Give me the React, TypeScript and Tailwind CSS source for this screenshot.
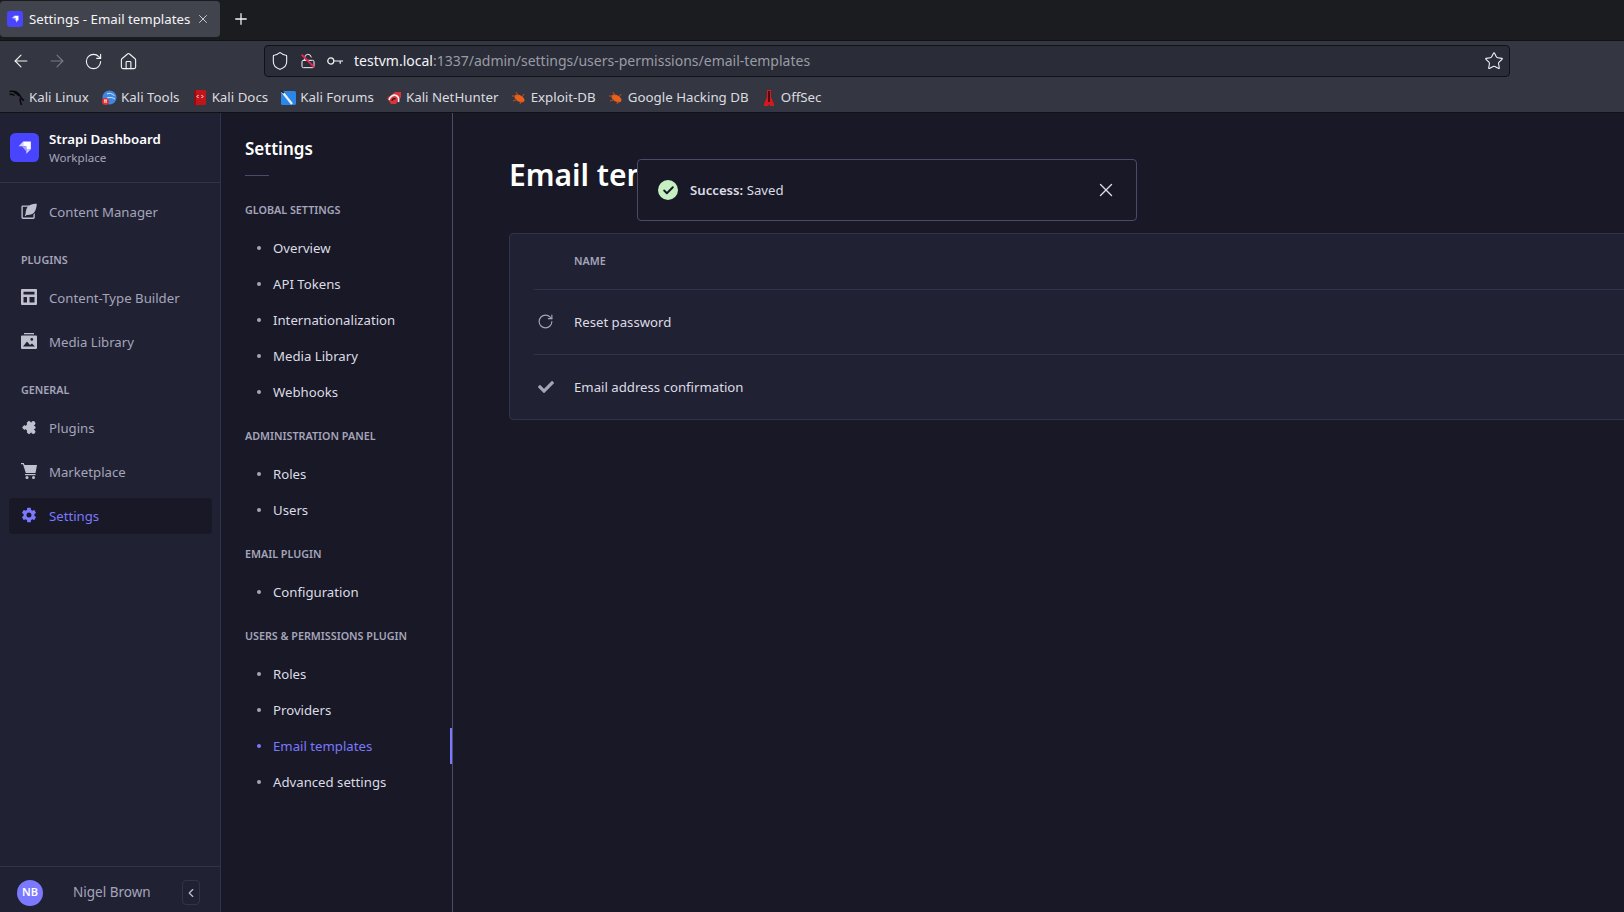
import { ArrowLeft, ArrowRight, Check, ChevronLeft, House, LockOpen, Plus, RotateCw, Shield, Star, X } from 'lucide-react';
import { FaCheck } from 'react-icons/fa';
import { IoSettingsSharp } from 'react-icons/io5';

/* Strapi mark */
function StrapiLogo({ className }: { className: string }) {
  return (
    <svg viewBox="0 0 32 32" className={className}>
      <rect width="32" height="32" rx="6" fill="#4945ff" />
      <path d="M14.500 9.500H23V18h-5v-3.500h-3.500z" fill="#fff" />
      <path d="M14.500 9.500v5h-5z" fill="#d3d2ff" />
      <path d="M18 18h5l-5 5z" fill="#d3d2ff" />
      <path d="M13 14.500h5V20z" fill="#a9a7ff" />
    </svg>
  );
}

function ContentIcon() {
  return (
    <svg viewBox="0 0 18 18" className="w-[17px] h-[17px]" fill="#c0c0cf">
      <path d="M17.800.2c-5 .2-9.300 1.400-11 4.600-1.200 2.300-1.600 5-1.700 7.200l-.9 1.700 1.200.5.800-1.400c4 .3 7-.7 8.800-3C16.700 7.300 17.500 4 17.800.2z" />
      <path d="M9.500 2.200H2A1.500 1.500 0 0 0 .5 3.700v12.100A1.500 1.500 0 0 0 2 17.300h12a1.500 1.500 0 0 0 1.500-1.500V11l-1.500 1.500v3.300H2V3.700h6.300z" />
    </svg>
  );
}

function LayoutIcon() {
  return (
    <svg viewBox="0 0 16 16" className="w-[16px] h-[16px]" fill="#c0c0cf">
      <path fillRule="evenodd" d="M1 0h14a1 1 0 0 1 1 1v14a1 1 0 0 1-1 1H1a1 1 0 0 1-1-1V1a1 1 0 0 1 1-1zm1.500 2.800v2.700h11V2.800zm0 5.200v5.500h3.500V8zm6 0v5.500h5V8z" />
    </svg>
  );
}

function MediaIcon() {
  return (
    <svg viewBox="0 0 16 16" className="w-[16px] h-[16px]" fill="#c0c0cf">
      <path d="M3 0h10v1.300H3z" />
      <path fillRule="evenodd" d="M1 2.500h14a1 1 0 0 1 1 1V15a1 1 0 0 1-1 1H1a1 1 0 0 1-1-1V3.500a1 1 0 0 1 1-1zM10.800 5a1.400 1.400 0 1 0 0 2.800 1.400 1.400 0 0 0 0-2.800zM2 13.500h12l-3-3-2 1.500-3-3.500z" />
    </svg>
  );
}

function PuzzleIcon() {
  return (
    <svg viewBox="0 0 16 16" className="w-[17px] h-[17px]" fill="#c0c0cf">
      <g transform="rotate(45 8 8)">
        <rect x="3" y="3" width="10" height="10" rx="1" />
        <circle cx="8" cy="2" r="2.200" />
        <circle cx="14" cy="8" r="2.200" />
        <circle cx="3" cy="8" r="1.600" fill="#212134" />
        <circle cx="8" cy="13" r="1.600" fill="#212134" />
      </g>
    </svg>
  );
}

function CartIcon() {
  return (
    <svg viewBox="0 0 16 16" className="w-[16px] h-[16px]" fill="#c0c0cf">
      <path d="M0 0h2.800l.8 2H16l-1.500 8H4.800L2 1.300H0z" />
      <rect x="4" y="11" width="10.500" height="1.200" />
      <circle cx="6" cy="14.500" r="1.500" />
      <circle cx="12.500" cy="14.500" r="1.500" />
    </svg>
  );
}

function Dot({ active }: { active?: boolean }) {
  return <span className={`w-[4px] h-[4px] rounded-full shrink-0 ${active ? 'bg-[#7b79ff]' : 'bg-[#a5a5ba]'}`} />;
}

function MainLink({ icon, label, active }: { icon: React.ReactNode; label: string; active?: boolean }) {
  return (
    <div className={`h-[36px] flex items-center pl-[12px] rounded ${active ? 'bg-[#181826] text-[#7b79ff]' : 'text-[#a5a5ba]'}`}>
      <span className="w-[16px] h-[17px] flex items-center justify-center mr-[12px] -mt-[2px]">{icon}</span>
      <span className="text-[13.200px] pt-[1px]">{label}</span>
    </div>
  );
}

function SideSection({ title, links, active }: { title: string; links: string[]; active?: string }) {
  return (
    <div className="mb-[16px]">
      <div className="h-[20px] flex items-center px-[24px] text-[10.750px] font-semibold text-[#a5a5ba] mb-[10px] whitespace-nowrap">{title}</div>
      {links.map(link => (
        <div key={link} className={`h-[36px] flex items-center pl-[36px] gap-[10px] text-[13.200px] relative ${link === active ? 'text-[#7b79ff]' : 'text-[#dcdce4]'}`}>
          <Dot active={link === active} />
          <span className="ml-[2px] pt-[1px]">{link}</span>
          {link === active && <span className="absolute right-0 top-0 bottom-0 w-[2px] bg-[#7b79ff]" />}
        </div>
      ))}
    </div>
  );
}

function BugIcon() {
  return (
    <svg viewBox="0 0 16 16" className="w-[16px] h-[16px]">
      <ellipse cx="8.500" cy="8.500" rx="5.500" ry="3.200" transform="rotate(30 8.500 8.500)" fill="#e8601c" />
      <path d="M1 6h4M2 11l4-1.500M5 2l2 3.500M9 14l1-3M13 4l-2 3" stroke="#c2501a" strokeWidth="1" />
    </svg>
  );
}

const bookmarks: { label: string; icon: React.ReactNode }[] = [
  {
    label: 'Kali Linux',
    icon: (
      <svg viewBox="0 0 16 16" className="w-[16px] h-[16px]" fill="none" stroke="#08080c" strokeWidth="1.500">
        <path d="M.5 1.500c4.500-1 8 .5 10 3.500 1.300 2 1.500 4 4.500 5.500M11 8.500c.3 2.500.3 4 1.500 6.500M3.500 1c2.500 2 5 2.500 6.500 5M.5 4.500c2-.5 3.500 0 5 1" />
      </svg>
    ),
  },
  {
    label: 'Kali Tools',
    icon: (
      <svg viewBox="0 0 16 16" className="w-[16px] h-[16px]">
        <circle cx="8.500" cy="7.500" r="7" fill="#3f86e0" />
        <path d="M6 4c3-1.500 6 0 7.500 2M6 8c3-1 6-.5 8 1" stroke="#d8e8fa" strokeWidth="1" fill="none" />
        <circle cx="4.500" cy="11.500" r="3.500" fill="#e0312f" />
        <path d="M3 10h3M3.800 10v3M5.200 10v3" stroke="#fff" strokeWidth=".8" />
      </svg>
    ),
  },
  {
    label: 'Kali Docs',
    icon: (
      <svg viewBox="0 0 16 16" className="w-[16px] h-[16px]">
        <rect x="2" y="0" width="12" height="15" rx="1" fill="#c2151b" />
        <rect x="2" y="0" width="2" height="16" fill="#8a1015" />
        <path d="M6.500 5 5 6.500 6.500 8M9.500 5 11 6.500 9.500 8" stroke="#fff" strokeWidth="1" fill="none" />
      </svg>
    ),
  },
  {
    label: 'Kali Forums',
    icon: (
      <svg viewBox="0 0 16 16" className="w-[16px] h-[16px]">
        <rect x="1" y="1" width="15" height="14" rx="1.500" fill="#2a86e8" />
        <path d="M2 1.500 12 14" stroke="#eef2f7" strokeWidth="2.200" />
        <path d="M1 .5 4 3" stroke="#22252c" strokeWidth="2" />
      </svg>
    ),
  },
  {
    label: 'Kali NetHunter',
    icon: (
      <svg viewBox="0 0 16 16" className="w-[16px] h-[16px]">
        <path d="M1 8 9 2h6v5l-5 7H5z" fill="#d9333b" />
        <path d="M3 10c1-4 5-6 8-4 1.500 1 2 3 1.500 6" stroke="#f2f2f4" strokeWidth="1.600" fill="none" />
        <path d="M6 11c0-2 2-3 3.500-2" stroke="#1c1c22" strokeWidth="1.200" fill="none" />
      </svg>
    ),
  },
  { label: 'Exploit-DB', icon: <BugIcon /> },
  { label: 'Google Hacking DB', icon: <BugIcon /> },
  {
    label: 'OffSec',
    icon: (
      <svg viewBox="0 0 16 16" className="w-[16px] h-[16px]">
        <path d="M6 0h4v7l3 7v2H9l-1-2-1 2H3v-2l3-7z" fill="#d8171f" />
        <path d="M8 1v11" stroke="#30080a" strokeWidth="1.600" />
      </svg>
    ),
  },
];

export default function App() {
  return (
    <div className="h-screen w-full overflow-hidden flex flex-col bg-[#181826] font-['Noto_Sans',sans-serif]">

      {/* Tab strip */}
      <div className="h-[41px] shrink-0 bg-[#1b1c20] flex items-start pt-[1px] border-b border-[#111216]">
        <div className="w-[220px] h-[36px] rounded-[4px] bg-[#41444d] flex items-center pl-[7px] pr-[10px] text-[#f4f4f6]">
          <StrapiLogo className="w-[16px] h-[16px] shrink-0" />
          <span className="ml-[6px] pt-[1px] text-[13.250px] whitespace-nowrap flex-1">Settings - Email templates</span>
          <X size={14} strokeWidth={1.300} className="-mt-[1px]" />
        </div>
        <Plus size={18} strokeWidth={1.700} className="ml-[12px] mt-[9px] text-[#f4f4f6]" />
      </div>

      {/* Toolbar */}
      <div className="h-[40px] shrink-0 bg-[#343741] flex items-center">
        <div className="w-[264px] flex items-center pl-[3px] text-[#f4f4f6] shrink-0">
          <span className="w-[36px] flex justify-center"><ArrowLeft size={20} strokeWidth={1.300} /></span>
          <span className="w-[36px] flex justify-center text-[#7a7c84]"><ArrowRight size={20} strokeWidth={1.300} /></span>
          <span className="w-[36px] flex justify-center"><RotateCw size={19} strokeWidth={1.400} /></span>
          <span className="w-[35px] flex justify-center"><House size={19} strokeWidth={1.400} /></span>
        </div>
        <div className="w-[1246px] h-[32px] rounded-[4px] border border-[#111216] bg-[#2a2c38] flex items-center text-[#f4f4f6]">
          <Shield size={20} strokeWidth={1.300} className="ml-[5px]" />
          <span className="relative ml-[10px] w-[16px] h-[17px]">
            <LockOpen size={16} strokeWidth={1.500} />
            <span className="absolute left-[-1px] top-[7px] w-[18px] h-[2px] bg-[#e22850] rotate-45" />
          </span>
          <svg viewBox="0 0 18 10" className="ml-[11px] w-[17px] h-[10px]" fill="none" stroke="#f4f4f6" strokeWidth="1.300">
            <circle cx="4" cy="5" r="3.200" />
            <path d="M7.200 5H17M14 5v3" />
          </svg>
          <span className="ml-[10px] pb-[2px] text-[14px] whitespace-nowrap">
            testvm.local<span className="text-[#9a9ca4]">:1337/admin/settings/users-permissions/email-templates</span>
          </span>
          <Star size={20} strokeWidth={1.300} className="ml-auto mr-[5px]" />
        </div>
      </div>

      {/* Bookmarks */}
      <div className="h-[32px] shrink-0 bg-[#343741] flex items-center pl-[9px] gap-[12.200px] border-b border-[#111216] pt-[2px]">
        {bookmarks.map(b => (
          <div key={b.label} className="flex items-center gap-[4px] text-[13.300px] text-[#dcdce0] whitespace-nowrap">
            {b.icon}
            <span>{b.label}</span>
          </div>
        ))}
      </div>

      <div className="flex-1 min-h-0 flex relative">

        {/* Main nav */}
        <div className="w-[221px] shrink-0 bg-[#212134] border-r border-[#32324d] flex flex-col">
          <div className="h-[70px] shrink-0 border-b border-[#32324d] flex items-center pl-[10px] gap-[10px]">
            <StrapiLogo className="w-[29px] h-[29px] shrink-0 -mt-[1px]" />
            <div className="pt-[1px]">
              <div className="text-[13.250px] font-semibold leading-[19px] text-[#ffffff]">Strapi Dashboard</div>
              <div className="text-[11.600px] leading-[18px] text-[#a5a5ba]">Workplace</div>
            </div>
          </div>
          <div className="flex-1 pl-[9px] pr-[8px] pt-[11px]">
            <MainLink icon={<ContentIcon />} label="Content Manager" />
            <div className="h-[20px] mt-[20px] mb-[10px] flex items-center pl-[12px] text-[10.750px] font-semibold text-[#a5a5ba]">PLUGINS</div>
            <div className="flex flex-col gap-[8px]">
              <MainLink icon={<LayoutIcon />} label="Content-Type Builder" />
              <MainLink icon={<MediaIcon />} label="Media Library" />
            </div>
            <div className="h-[20px] mt-[20px] mb-[10px] flex items-center pl-[12px] text-[10.750px] font-semibold text-[#a5a5ba]">GENERAL</div>
            <div className="flex flex-col gap-[8px]">
              <MainLink icon={<PuzzleIcon />} label="Plugins" />
              <MainLink icon={<CartIcon />} label="Marketplace" />
              <MainLink icon={<IoSettingsSharp size={18} color="#7b79ff" />} label="Settings" active />
            </div>
          </div>
          <div className="h-[46px] shrink-0 border-t border-[#32324d] flex items-center pl-[17px] pt-[6px]">
            <span className="w-[26px] h-[26px] rounded-full bg-[#7b79ff] text-white text-[11px] font-semibold flex items-center justify-center">NB</span>
            <span className="ml-[30px] text-[13.500px] text-[#a5a5ba] whitespace-nowrap">Nigel Brown</span>
            <span className="ml-[31px] w-[18px] h-[25px] rounded border border-[#32324d] flex items-center justify-center text-[#c0c0cf] shrink-0">
              <ChevronLeft size={14} />
            </span>
          </div>
        </div>

        {/* Settings nav */}
        <div className="w-[232px] shrink-0 border-r border-[#4a4a6a] flex flex-col">
          <div className="pl-[24px] pt-[21px]">
            <div className="text-[17px] font-semibold text-white leading-[30px]">Settings</div>
            <div className="w-[24px] h-px bg-[#4a4a6a] mt-[11px] mb-[24px]" />
          </div>
          <SideSection title="GLOBAL SETTINGS" links={['Overview', 'API Tokens', 'Internationalization', 'Media Library', 'Webhooks']} />
          <SideSection title="ADMINISTRATION PANEL" links={['Roles', 'Users']} />
          <SideSection title="EMAIL PLUGIN" links={['Configuration']} />
          <SideSection title="USERS & PERMISSIONS PLUGIN" links={['Roles', 'Providers', 'Email templates', 'Advanced settings']} active="Email templates" />
        </div>

        {/* Content */}
        <div className="flex-1 min-w-0 overflow-hidden pl-[56px]">
          <h1 className="text-[30px] font-semibold leading-[40px] text-white mt-[42px] mb-[38px] whitespace-nowrap">Email templates</h1>
          <div className="w-[1200px] rounded border border-[#32324d] bg-[#212134] pl-[24px]">
            <div className="h-[56px] border-b border-[#32324d] flex items-center pl-[40px] text-[10.750px] font-semibold text-[#a5a5ba]">NAME</div>
            <div className="h-[65px] border-b border-[#32324d] flex items-center text-[13.200px] text-[#dcdce4] pt-[1px]">
              <RotateCw size={17} strokeWidth={1.600} className="ml-[3px] mr-[20px] -mt-[3px] text-[#a5a5ba]" />
              <span>Reset password</span>
            </div>
            <div className="h-[64px] flex items-center text-[13.200px] text-[#dcdce4] pt-[1px]">
              <FaCheck size={16} className="ml-[4px] mr-[20px] -mt-[2px] text-[#a5a5ba]" />
              <span>Email address confirmation</span>
            </div>
          </div>
        </div>

        {/* Toast */}
        <div className="absolute left-[637px] top-[46px] w-[500px] h-[62px] rounded border border-[#4a4a6a] bg-[#181826] flex items-center pl-[20px]">
          <span className="w-[20px] h-[20px] rounded-full bg-[#c6f0c2] flex items-center justify-center">
            <Check size={13} strokeWidth={3.500} className="text-[#181826]" />
          </span>
          <span className="ml-[12px] pt-[1px] text-[13.200px] text-[#dcdce4]">
            <span className="font-semibold">Success:</span> Saved
          </span>
          <X size={22} strokeWidth={1.500} className="absolute right-[19px] top-[19px] text-[#dcdce4]" />
        </div>
      </div>
    </div>
  );
}
